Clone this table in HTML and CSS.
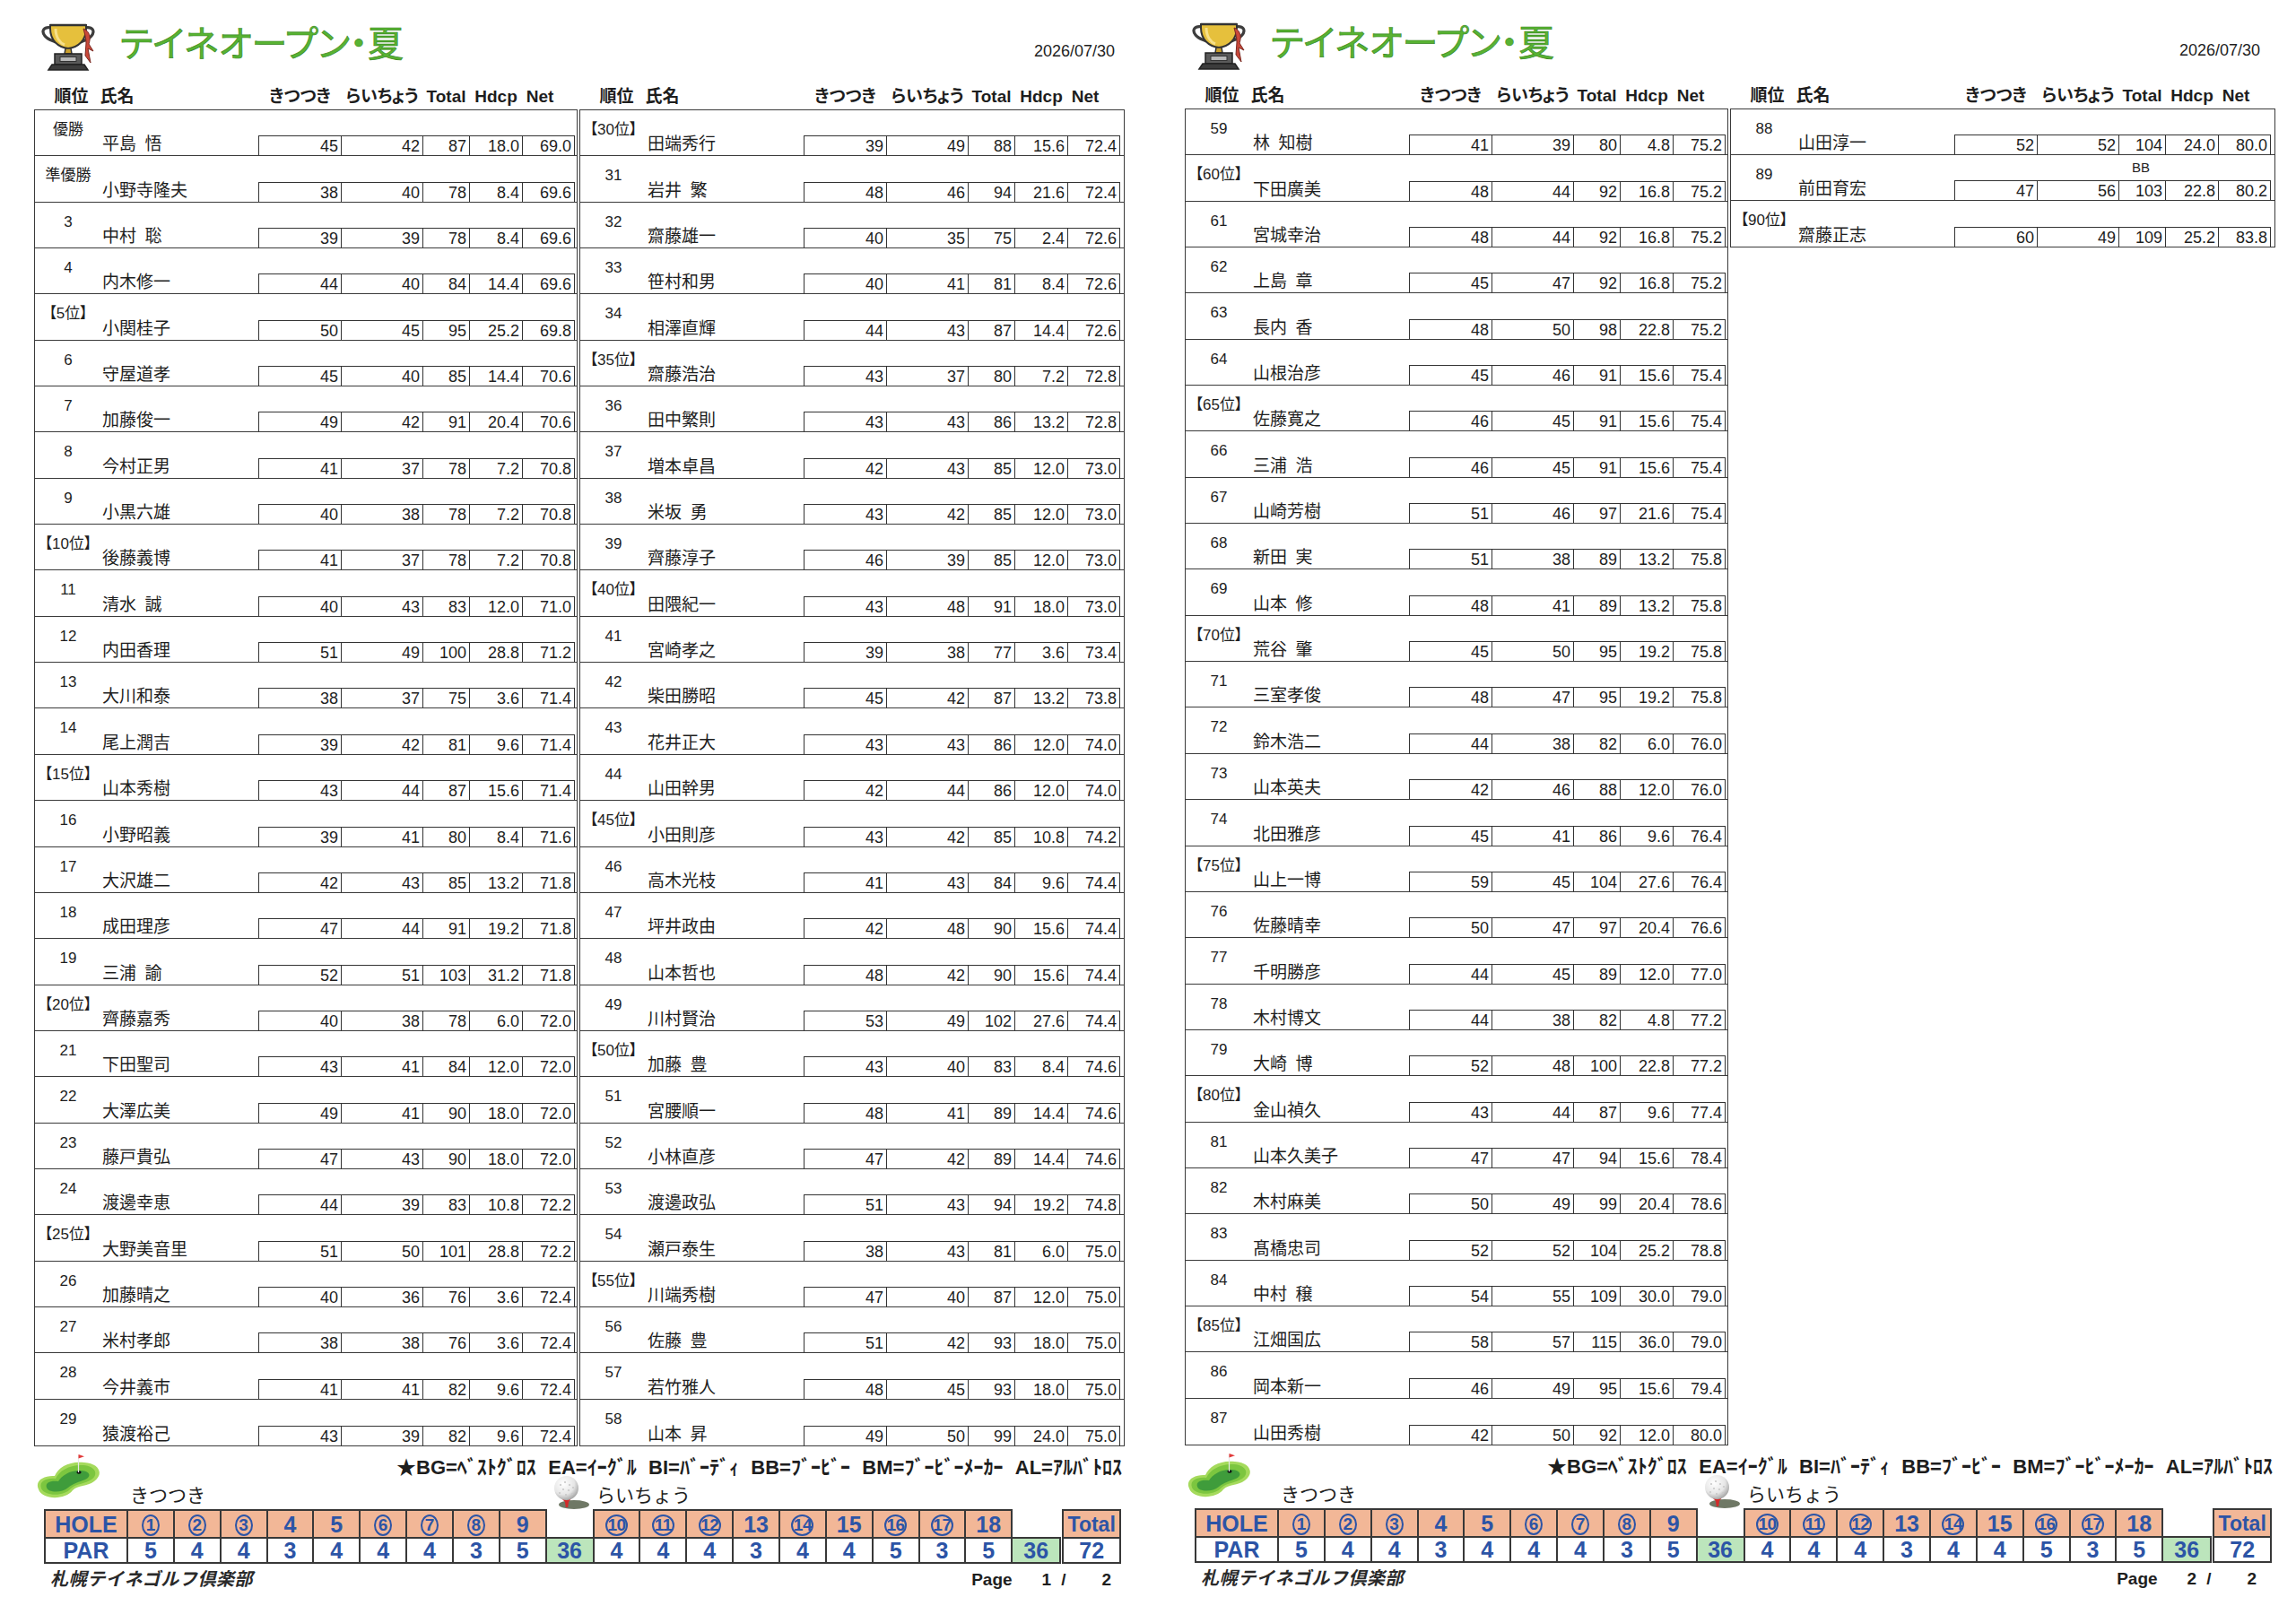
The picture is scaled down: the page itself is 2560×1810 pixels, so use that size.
FILE: index.html
```html
<!DOCTYPE html>
<html lang="ja">
<head>
<meta charset="utf-8">
<title>テイネオープン・夏</title>
<link rel="stylesheet" href="styles.css">
</head>
<body>
<div class="sheet">

<!-- ================= PAGE 1 ================= -->
<section class="page page-1">
  <header class="head">
    <svg class="trophy" viewBox="0 0 62 56" aria-hidden="true">
      <path d="M12 8 C2 6 0 12 4 17 C7 21 12 22 16 24" fill="none" stroke="#3d3d3d" stroke-width="3.2"/>
      <path d="M48 8 C58 6 60 12 56 17 C53 21 48 22 44 24" fill="none" stroke="#3d3d3d" stroke-width="3.2"/>
      <path d="M10 5 H50 V9 C50 22 41 30 30 31 C19 30 10 22 10 9 Z" fill="#e6c03c" stroke="#333" stroke-width="2"/>
      <path d="M16 9 C16 19 21 25 26 27" stroke="#f7e08a" stroke-width="3" fill="none"/>
      <path d="M10 5 H50" stroke="#333" stroke-width="2.6"/>
      <path d="M27 31 H33 L34 37 H26 Z" fill="#c99f2e" stroke="#333" stroke-width="1.5"/>
      <rect x="15" y="37" width="30" height="12" fill="#5a5a5a" stroke="#222" stroke-width="1.5"/>
      <rect x="21" y="40.5" width="18" height="5" fill="#b8b8b8" stroke="#333" stroke-width="1"/>
      <path d="M8 55 L12 49 H48 L52 55 Z" fill="#3c3c3c" stroke="#222" stroke-width="1.5"/>
      <path d="M47 9 C53 11 56 18 53 26 L58 34 L52 31 L55 47 L49 39 L50 25 C50 18 48 14 47 9 Z" fill="#c9483a" stroke="#7a2a22" stroke-width="1"/>
    </svg>
    <h1 class="title">テイネオープン・夏</h1>
    <div class="date">2026/07/30</div>
  </header>

  <div class="colhead">
    <div class="hgrid l"><span class="h-rank">順位</span><span class="h-name">氏名</span><span>きつつき</span><span>らいちょう</span><span>Total</span><span>Hdcp</span><span class="h-net">Net</span></div>
    <div class="hgrid r"><span class="h-rank">順位</span><span class="h-name">氏名</span><span>きつつき</span><span>らいちょう</span><span>Total</span><span>Hdcp</span><span class="h-net">Net</span></div>
  </div>

  <div class="tables">
    <div class="half l">
      <div class="row"><div class="rk">優勝</div><div class="nm">平島&ensp;悟</div><div class="box"><span>45</span><span>42</span><span>87</span><span>18.0</span><span>69.0</span></div></div>
      <div class="row"><div class="rk">準優勝</div><div class="nm">小野寺隆夫</div><div class="box"><span>38</span><span>40</span><span>78</span><span>8.4</span><span>69.6</span></div></div>
      <div class="row"><div class="rk">3</div><div class="nm">中村&ensp;聡</div><div class="box"><span>39</span><span>39</span><span>78</span><span>8.4</span><span>69.6</span></div></div>
      <div class="row"><div class="rk">4</div><div class="nm">内木修一</div><div class="box"><span>44</span><span>40</span><span>84</span><span>14.4</span><span>69.6</span></div></div>
      <div class="row"><div class="rk">【5位】</div><div class="nm">小関桂子</div><div class="box"><span>50</span><span>45</span><span>95</span><span>25.2</span><span>69.8</span></div></div>
      <div class="row"><div class="rk">6</div><div class="nm">守屋道孝</div><div class="box"><span>45</span><span>40</span><span>85</span><span>14.4</span><span>70.6</span></div></div>
      <div class="row"><div class="rk">7</div><div class="nm">加藤俊一</div><div class="box"><span>49</span><span>42</span><span>91</span><span>20.4</span><span>70.6</span></div></div>
      <div class="row"><div class="rk">8</div><div class="nm">今村正男</div><div class="box"><span>41</span><span>37</span><span>78</span><span>7.2</span><span>70.8</span></div></div>
      <div class="row"><div class="rk">9</div><div class="nm">小黒六雄</div><div class="box"><span>40</span><span>38</span><span>78</span><span>7.2</span><span>70.8</span></div></div>
      <div class="row"><div class="rk">【10位】</div><div class="nm">後藤義博</div><div class="box"><span>41</span><span>37</span><span>78</span><span>7.2</span><span>70.8</span></div></div>
      <div class="row"><div class="rk">11</div><div class="nm">清水&ensp;誠</div><div class="box"><span>40</span><span>43</span><span>83</span><span>12.0</span><span>71.0</span></div></div>
      <div class="row"><div class="rk">12</div><div class="nm">内田香理</div><div class="box"><span>51</span><span>49</span><span>100</span><span>28.8</span><span>71.2</span></div></div>
      <div class="row"><div class="rk">13</div><div class="nm">大川和泰</div><div class="box"><span>38</span><span>37</span><span>75</span><span>3.6</span><span>71.4</span></div></div>
      <div class="row"><div class="rk">14</div><div class="nm">尾上潤吉</div><div class="box"><span>39</span><span>42</span><span>81</span><span>9.6</span><span>71.4</span></div></div>
      <div class="row"><div class="rk">【15位】</div><div class="nm">山本秀樹</div><div class="box"><span>43</span><span>44</span><span>87</span><span>15.6</span><span>71.4</span></div></div>
      <div class="row"><div class="rk">16</div><div class="nm">小野昭義</div><div class="box"><span>39</span><span>41</span><span>80</span><span>8.4</span><span>71.6</span></div></div>
      <div class="row"><div class="rk">17</div><div class="nm">大沢雄二</div><div class="box"><span>42</span><span>43</span><span>85</span><span>13.2</span><span>71.8</span></div></div>
      <div class="row"><div class="rk">18</div><div class="nm">成田理彦</div><div class="box"><span>47</span><span>44</span><span>91</span><span>19.2</span><span>71.8</span></div></div>
      <div class="row"><div class="rk">19</div><div class="nm">三浦&ensp;諭</div><div class="box"><span>52</span><span>51</span><span>103</span><span>31.2</span><span>71.8</span></div></div>
      <div class="row"><div class="rk">【20位】</div><div class="nm">齊藤嘉秀</div><div class="box"><span>40</span><span>38</span><span>78</span><span>6.0</span><span>72.0</span></div></div>
      <div class="row"><div class="rk">21</div><div class="nm">下田聖司</div><div class="box"><span>43</span><span>41</span><span>84</span><span>12.0</span><span>72.0</span></div></div>
      <div class="row"><div class="rk">22</div><div class="nm">大澤広美</div><div class="box"><span>49</span><span>41</span><span>90</span><span>18.0</span><span>72.0</span></div></div>
      <div class="row"><div class="rk">23</div><div class="nm">藤戸貴弘</div><div class="box"><span>47</span><span>43</span><span>90</span><span>18.0</span><span>72.0</span></div></div>
      <div class="row"><div class="rk">24</div><div class="nm">渡邊幸恵</div><div class="box"><span>44</span><span>39</span><span>83</span><span>10.8</span><span>72.2</span></div></div>
      <div class="row"><div class="rk">【25位】</div><div class="nm">大野美音里</div><div class="box"><span>51</span><span>50</span><span>101</span><span>28.8</span><span>72.2</span></div></div>
      <div class="row"><div class="rk">26</div><div class="nm">加藤晴之</div><div class="box"><span>40</span><span>36</span><span>76</span><span>3.6</span><span>72.4</span></div></div>
      <div class="row"><div class="rk">27</div><div class="nm">米村孝郎</div><div class="box"><span>38</span><span>38</span><span>76</span><span>3.6</span><span>72.4</span></div></div>
      <div class="row"><div class="rk">28</div><div class="nm">今井義市</div><div class="box"><span>41</span><span>41</span><span>82</span><span>9.6</span><span>72.4</span></div></div>
      <div class="row"><div class="rk">29</div><div class="nm">猿渡裕己</div><div class="box"><span>43</span><span>39</span><span>82</span><span>9.6</span><span>72.4</span></div></div>
    </div>
    <div class="half r">
      <div class="row"><div class="rk">【30位】</div><div class="nm">田端秀行</div><div class="box"><span>39</span><span>49</span><span>88</span><span>15.6</span><span>72.4</span></div></div>
      <div class="row"><div class="rk">31</div><div class="nm">岩井&ensp;繁</div><div class="box"><span>48</span><span>46</span><span>94</span><span>21.6</span><span>72.4</span></div></div>
      <div class="row"><div class="rk">32</div><div class="nm">齋藤雄一</div><div class="box"><span>40</span><span>35</span><span>75</span><span>2.4</span><span>72.6</span></div></div>
      <div class="row"><div class="rk">33</div><div class="nm">笹村和男</div><div class="box"><span>40</span><span>41</span><span>81</span><span>8.4</span><span>72.6</span></div></div>
      <div class="row"><div class="rk">34</div><div class="nm">相澤直輝</div><div class="box"><span>44</span><span>43</span><span>87</span><span>14.4</span><span>72.6</span></div></div>
      <div class="row"><div class="rk">【35位】</div><div class="nm">齋藤浩治</div><div class="box"><span>43</span><span>37</span><span>80</span><span>7.2</span><span>72.8</span></div></div>
      <div class="row"><div class="rk">36</div><div class="nm">田中繁則</div><div class="box"><span>43</span><span>43</span><span>86</span><span>13.2</span><span>72.8</span></div></div>
      <div class="row"><div class="rk">37</div><div class="nm">増本卓昌</div><div class="box"><span>42</span><span>43</span><span>85</span><span>12.0</span><span>73.0</span></div></div>
      <div class="row"><div class="rk">38</div><div class="nm">米坂&ensp;勇</div><div class="box"><span>43</span><span>42</span><span>85</span><span>12.0</span><span>73.0</span></div></div>
      <div class="row"><div class="rk">39</div><div class="nm">齊藤淳子</div><div class="box"><span>46</span><span>39</span><span>85</span><span>12.0</span><span>73.0</span></div></div>
      <div class="row"><div class="rk">【40位】</div><div class="nm">田隈紀一</div><div class="box"><span>43</span><span>48</span><span>91</span><span>18.0</span><span>73.0</span></div></div>
      <div class="row"><div class="rk">41</div><div class="nm">宮崎孝之</div><div class="box"><span>39</span><span>38</span><span>77</span><span>3.6</span><span>73.4</span></div></div>
      <div class="row"><div class="rk">42</div><div class="nm">柴田勝昭</div><div class="box"><span>45</span><span>42</span><span>87</span><span>13.2</span><span>73.8</span></div></div>
      <div class="row"><div class="rk">43</div><div class="nm">花井正大</div><div class="box"><span>43</span><span>43</span><span>86</span><span>12.0</span><span>74.0</span></div></div>
      <div class="row"><div class="rk">44</div><div class="nm">山田幹男</div><div class="box"><span>42</span><span>44</span><span>86</span><span>12.0</span><span>74.0</span></div></div>
      <div class="row"><div class="rk">【45位】</div><div class="nm">小田則彦</div><div class="box"><span>43</span><span>42</span><span>85</span><span>10.8</span><span>74.2</span></div></div>
      <div class="row"><div class="rk">46</div><div class="nm">高木光枝</div><div class="box"><span>41</span><span>43</span><span>84</span><span>9.6</span><span>74.4</span></div></div>
      <div class="row"><div class="rk">47</div><div class="nm">坪井政由</div><div class="box"><span>42</span><span>48</span><span>90</span><span>15.6</span><span>74.4</span></div></div>
      <div class="row"><div class="rk">48</div><div class="nm">山本哲也</div><div class="box"><span>48</span><span>42</span><span>90</span><span>15.6</span><span>74.4</span></div></div>
      <div class="row"><div class="rk">49</div><div class="nm">川村賢治</div><div class="box"><span>53</span><span>49</span><span>102</span><span>27.6</span><span>74.4</span></div></div>
      <div class="row"><div class="rk">【50位】</div><div class="nm">加藤&ensp;豊</div><div class="box"><span>43</span><span>40</span><span>83</span><span>8.4</span><span>74.6</span></div></div>
      <div class="row"><div class="rk">51</div><div class="nm">宮腰順一</div><div class="box"><span>48</span><span>41</span><span>89</span><span>14.4</span><span>74.6</span></div></div>
      <div class="row"><div class="rk">52</div><div class="nm">小林直彦</div><div class="box"><span>47</span><span>42</span><span>89</span><span>14.4</span><span>74.6</span></div></div>
      <div class="row"><div class="rk">53</div><div class="nm">渡邊政弘</div><div class="box"><span>51</span><span>43</span><span>94</span><span>19.2</span><span>74.8</span></div></div>
      <div class="row"><div class="rk">54</div><div class="nm">瀬戸泰生</div><div class="box"><span>38</span><span>43</span><span>81</span><span>6.0</span><span>75.0</span></div></div>
      <div class="row"><div class="rk">【55位】</div><div class="nm">川端秀樹</div><div class="box"><span>47</span><span>40</span><span>87</span><span>12.0</span><span>75.0</span></div></div>
      <div class="row"><div class="rk">56</div><div class="nm">佐藤&ensp;豊</div><div class="box"><span>51</span><span>42</span><span>93</span><span>18.0</span><span>75.0</span></div></div>
      <div class="row"><div class="rk">57</div><div class="nm">若竹雅人</div><div class="box"><span>48</span><span>45</span><span>93</span><span>18.0</span><span>75.0</span></div></div>
      <div class="row"><div class="rk">58</div><div class="nm">山本&ensp;昇</div><div class="box"><span>49</span><span>50</span><span>99</span><span>24.0</span><span>75.0</span></div></div>
    </div>
  </div>

  <div class="foot-top">
    <svg class="green" viewBox="0 0 76 54" aria-hidden="true">
      <path d="M5 41 C0 30 13 25 23 26 C27 16 40 9 56 11 C73 12 78 24 67 32 C59 38 49 36 43 42 C35 53 9 53 5 41 Z" fill="#a5da5c"/>
      <path d="M8 40 C5 31 15 28 24 29 C28 20 40 13 55 14 C69 15 72 25 64 30 C57 35 48 34 41 40 C34 49 12 49 8 40 Z" fill="#7cc63f"/>
      <path d="M14 39 C12 33 19 31 27 32 C31 25 41 19 53 20 C63 21 64 27 57 30 C50 33 44 34 38 39 C31 45 16 45 14 39 Z" fill="#3f9c3b"/>
      <ellipse cx="50" cy="22" rx="2.6" ry="1.8" fill="#111"/>
      <line x1="49.5" y1="22" x2="49.5" y2="3" stroke="#e8e8e8" stroke-width="1.2"/>
      <path d="M49.5 2 L56 4.2 L49.5 6.5 Z" fill="#e23a3a"/>
    </svg>
    <div class="legend"><span>★BG=ﾍﾞｽﾄｸﾞﾛｽ</span><span>EA=ｲｰｸﾞﾙ</span><span>BI=ﾊﾞｰﾃﾞｨ</span><span>BB=ﾌﾞｰﾋﾞｰ</span><span>BM=ﾌﾞｰﾋﾞｰﾒｰｶｰ</span><span>AL=ｱﾙﾊﾞﾄﾛｽ</span></div>
    <div class="lbl k">きつつき</div>
    <svg class="ball" viewBox="0 0 53 38" aria-hidden="true">
      <defs><radialGradient id="ballg1" cx="0.38" cy="0.32" r="0.75"><stop offset="0" stop-color="#ffffff"/><stop offset="0.6" stop-color="#e6e6e6"/><stop offset="1" stop-color="#9a9a9a"/></radialGradient></defs>
      <ellipse cx="33" cy="31" rx="17" ry="5" fill="#56604a" opacity="0.85"/>
      <path d="M19 24 H30 L27 28 L26.2 34 H23.8 L23 28 Z" fill="#d42a2a"/>
      <circle cx="24.5" cy="12.5" r="13.5" fill="url(#ballg1)"/>
      <g fill="#c9c9c9"><circle cx="18" cy="9" r="1.1"/><circle cx="23" cy="6" r="1.1"/><circle cx="28" cy="9" r="1.1"/><circle cx="21" cy="14" r="1.1"/><circle cx="27" cy="15" r="1.1"/><circle cx="32" cy="12" r="1.1"/><circle cx="17" cy="18" r="1.1"/><circle cx="24" cy="20" r="1.1"/><circle cx="31" cy="19" r="1.1"/></g>
    </svg>
    <div class="lbl r">らいちょう</div>
  </div>

  <table class="holes">
    <colgroup><col class="c-hole"><col class="c-h" span="9"><col class="c-g1"><col class="c-h" span="9"><col class="c-g2"><col class="c-sep"><col class="c-tot"></colgroup>
    <tr class="hr"><th>HOLE</th><td><span class="ci">1</span></td><td><span class="ci">2</span></td><td><span class="ci">3</span></td><td>4</td><td>5</td><td><span class="ci">6</span></td><td><span class="ci">7</span></td><td><span class="ci">8</span></td><td>9</td><td class="blank"></td><td><span class="ci w2">10</span></td><td><span class="ci w2">11</span></td><td><span class="ci w2">12</span></td><td>13</td><td><span class="ci w2">14</span></td><td>15</td><td><span class="ci w2">16</span></td><td><span class="ci w2">17</span></td><td>18</td><td class="blank"></td><td class="sep"></td><th class="tot">Total</th></tr>
    <tr class="pr"><th>PAR</th><td>5</td><td>4</td><td>4</td><td>3</td><td>4</td><td>4</td><td>4</td><td>3</td><td>5</td><td class="grn">36</td><td>4</td><td>4</td><td>4</td><td>3</td><td>4</td><td>4</td><td>5</td><td>3</td><td>5</td><td class="grn">36</td><td class="sep"></td><td>72</td></tr>
  </table>

  <div class="foot-bot">
    <div class="club">札幌テイネゴルフ倶楽部</div>
    <div class="pg"><span>Page</span><span class="n1">1</span><span class="sl">/</span><span class="n2">2</span></div>
  </div>
</section>

<!-- ================= PAGE 2 ================= -->
<section class="page page-2">
  <header class="head">
    <svg class="trophy" viewBox="0 0 62 56" aria-hidden="true">
      <path d="M12 8 C2 6 0 12 4 17 C7 21 12 22 16 24" fill="none" stroke="#3d3d3d" stroke-width="3.2"/>
      <path d="M48 8 C58 6 60 12 56 17 C53 21 48 22 44 24" fill="none" stroke="#3d3d3d" stroke-width="3.2"/>
      <path d="M10 5 H50 V9 C50 22 41 30 30 31 C19 30 10 22 10 9 Z" fill="#e6c03c" stroke="#333" stroke-width="2"/>
      <path d="M16 9 C16 19 21 25 26 27" stroke="#f7e08a" stroke-width="3" fill="none"/>
      <path d="M10 5 H50" stroke="#333" stroke-width="2.6"/>
      <path d="M27 31 H33 L34 37 H26 Z" fill="#c99f2e" stroke="#333" stroke-width="1.5"/>
      <rect x="15" y="37" width="30" height="12" fill="#5a5a5a" stroke="#222" stroke-width="1.5"/>
      <rect x="21" y="40.5" width="18" height="5" fill="#b8b8b8" stroke="#333" stroke-width="1"/>
      <path d="M8 55 L12 49 H48 L52 55 Z" fill="#3c3c3c" stroke="#222" stroke-width="1.5"/>
      <path d="M47 9 C53 11 56 18 53 26 L58 34 L52 31 L55 47 L49 39 L50 25 C50 18 48 14 47 9 Z" fill="#c9483a" stroke="#7a2a22" stroke-width="1"/>
    </svg>
    <h1 class="title">テイネオープン・夏</h1>
    <div class="date">2026/07/30</div>
  </header>

  <div class="colhead">
    <div class="hgrid l"><span class="h-rank">順位</span><span class="h-name">氏名</span><span>きつつき</span><span>らいちょう</span><span>Total</span><span>Hdcp</span><span class="h-net">Net</span></div>
    <div class="hgrid r"><span class="h-rank">順位</span><span class="h-name">氏名</span><span>きつつき</span><span>らいちょう</span><span>Total</span><span>Hdcp</span><span class="h-net">Net</span></div>
  </div>

  <div class="tables">
    <div class="half l">
      <div class="row"><div class="rk">59</div><div class="nm">林&ensp;知樹</div><div class="box"><span>41</span><span>39</span><span>80</span><span>4.8</span><span>75.2</span></div></div>
      <div class="row"><div class="rk">【60位】</div><div class="nm">下田廣美</div><div class="box"><span>48</span><span>44</span><span>92</span><span>16.8</span><span>75.2</span></div></div>
      <div class="row"><div class="rk">61</div><div class="nm">宮城幸治</div><div class="box"><span>48</span><span>44</span><span>92</span><span>16.8</span><span>75.2</span></div></div>
      <div class="row"><div class="rk">62</div><div class="nm">上島&ensp;章</div><div class="box"><span>45</span><span>47</span><span>92</span><span>16.8</span><span>75.2</span></div></div>
      <div class="row"><div class="rk">63</div><div class="nm">長内&ensp;香</div><div class="box"><span>48</span><span>50</span><span>98</span><span>22.8</span><span>75.2</span></div></div>
      <div class="row"><div class="rk">64</div><div class="nm">山根治彦</div><div class="box"><span>45</span><span>46</span><span>91</span><span>15.6</span><span>75.4</span></div></div>
      <div class="row"><div class="rk">【65位】</div><div class="nm">佐藤寛之</div><div class="box"><span>46</span><span>45</span><span>91</span><span>15.6</span><span>75.4</span></div></div>
      <div class="row"><div class="rk">66</div><div class="nm">三浦&ensp;浩</div><div class="box"><span>46</span><span>45</span><span>91</span><span>15.6</span><span>75.4</span></div></div>
      <div class="row"><div class="rk">67</div><div class="nm">山崎芳樹</div><div class="box"><span>51</span><span>46</span><span>97</span><span>21.6</span><span>75.4</span></div></div>
      <div class="row"><div class="rk">68</div><div class="nm">新田&ensp;実</div><div class="box"><span>51</span><span>38</span><span>89</span><span>13.2</span><span>75.8</span></div></div>
      <div class="row"><div class="rk">69</div><div class="nm">山本&ensp;修</div><div class="box"><span>48</span><span>41</span><span>89</span><span>13.2</span><span>75.8</span></div></div>
      <div class="row"><div class="rk">【70位】</div><div class="nm">荒谷&ensp;肇</div><div class="box"><span>45</span><span>50</span><span>95</span><span>19.2</span><span>75.8</span></div></div>
      <div class="row"><div class="rk">71</div><div class="nm">三室孝俊</div><div class="box"><span>48</span><span>47</span><span>95</span><span>19.2</span><span>75.8</span></div></div>
      <div class="row"><div class="rk">72</div><div class="nm">鈴木浩二</div><div class="box"><span>44</span><span>38</span><span>82</span><span>6.0</span><span>76.0</span></div></div>
      <div class="row"><div class="rk">73</div><div class="nm">山本英夫</div><div class="box"><span>42</span><span>46</span><span>88</span><span>12.0</span><span>76.0</span></div></div>
      <div class="row"><div class="rk">74</div><div class="nm">北田雅彦</div><div class="box"><span>45</span><span>41</span><span>86</span><span>9.6</span><span>76.4</span></div></div>
      <div class="row"><div class="rk">【75位】</div><div class="nm">山上一博</div><div class="box"><span>59</span><span>45</span><span>104</span><span>27.6</span><span>76.4</span></div></div>
      <div class="row"><div class="rk">76</div><div class="nm">佐藤晴幸</div><div class="box"><span>50</span><span>47</span><span>97</span><span>20.4</span><span>76.6</span></div></div>
      <div class="row"><div class="rk">77</div><div class="nm">千明勝彦</div><div class="box"><span>44</span><span>45</span><span>89</span><span>12.0</span><span>77.0</span></div></div>
      <div class="row"><div class="rk">78</div><div class="nm">木村博文</div><div class="box"><span>44</span><span>38</span><span>82</span><span>4.8</span><span>77.2</span></div></div>
      <div class="row"><div class="rk">79</div><div class="nm">大崎&ensp;博</div><div class="box"><span>52</span><span>48</span><span>100</span><span>22.8</span><span>77.2</span></div></div>
      <div class="row"><div class="rk">【80位】</div><div class="nm">金山禎久</div><div class="box"><span>43</span><span>44</span><span>87</span><span>9.6</span><span>77.4</span></div></div>
      <div class="row"><div class="rk">81</div><div class="nm">山本久美子</div><div class="box"><span>47</span><span>47</span><span>94</span><span>15.6</span><span>78.4</span></div></div>
      <div class="row"><div class="rk">82</div><div class="nm">木村麻美</div><div class="box"><span>50</span><span>49</span><span>99</span><span>20.4</span><span>78.6</span></div></div>
      <div class="row"><div class="rk">83</div><div class="nm">髙橋忠司</div><div class="box"><span>52</span><span>52</span><span>104</span><span>25.2</span><span>78.8</span></div></div>
      <div class="row"><div class="rk">84</div><div class="nm">中村&ensp;穣</div><div class="box"><span>54</span><span>55</span><span>109</span><span>30.0</span><span>79.0</span></div></div>
      <div class="row"><div class="rk">【85位】</div><div class="nm">江畑国広</div><div class="box"><span>58</span><span>57</span><span>115</span><span>36.0</span><span>79.0</span></div></div>
      <div class="row"><div class="rk">86</div><div class="nm">岡本新一</div><div class="box"><span>46</span><span>49</span><span>95</span><span>15.6</span><span>79.4</span></div></div>
      <div class="row"><div class="rk">87</div><div class="nm">山田秀樹</div><div class="box"><span>42</span><span>50</span><span>92</span><span>12.0</span><span>80.0</span></div></div>
    </div>
    <div class="half r short">
      <div class="row"><div class="rk">88</div><div class="nm">山田淳一</div><div class="box"><span>52</span><span>52</span><span>104</span><span>24.0</span><span>80.0</span></div></div>
      <div class="row"><div class="rk">89</div><div class="nm">前田育宏</div><div class="note">BB</div><div class="box"><span>47</span><span>56</span><span>103</span><span>22.8</span><span>80.2</span></div></div>
      <div class="row"><div class="rk">【90位】</div><div class="nm">齋藤正志</div><div class="box"><span>60</span><span>49</span><span>109</span><span>25.2</span><span>83.8</span></div></div>
    </div>
  </div>

  <div class="foot-top">
    <svg class="green" viewBox="0 0 76 54" aria-hidden="true">
      <path d="M5 41 C0 30 13 25 23 26 C27 16 40 9 56 11 C73 12 78 24 67 32 C59 38 49 36 43 42 C35 53 9 53 5 41 Z" fill="#a5da5c"/>
      <path d="M8 40 C5 31 15 28 24 29 C28 20 40 13 55 14 C69 15 72 25 64 30 C57 35 48 34 41 40 C34 49 12 49 8 40 Z" fill="#7cc63f"/>
      <path d="M14 39 C12 33 19 31 27 32 C31 25 41 19 53 20 C63 21 64 27 57 30 C50 33 44 34 38 39 C31 45 16 45 14 39 Z" fill="#3f9c3b"/>
      <ellipse cx="50" cy="22" rx="2.6" ry="1.8" fill="#111"/>
      <line x1="49.5" y1="22" x2="49.5" y2="3" stroke="#e8e8e8" stroke-width="1.2"/>
      <path d="M49.5 2 L56 4.2 L49.5 6.5 Z" fill="#e23a3a"/>
    </svg>
    <div class="legend"><span>★BG=ﾍﾞｽﾄｸﾞﾛｽ</span><span>EA=ｲｰｸﾞﾙ</span><span>BI=ﾊﾞｰﾃﾞｨ</span><span>BB=ﾌﾞｰﾋﾞｰ</span><span>BM=ﾌﾞｰﾋﾞｰﾒｰｶｰ</span><span>AL=ｱﾙﾊﾞﾄﾛｽ</span></div>
    <div class="lbl k">きつつき</div>
    <svg class="ball" viewBox="0 0 53 38" aria-hidden="true">
      <defs><radialGradient id="ballg2" cx="0.38" cy="0.32" r="0.75"><stop offset="0" stop-color="#ffffff"/><stop offset="0.6" stop-color="#e6e6e6"/><stop offset="1" stop-color="#9a9a9a"/></radialGradient></defs>
      <ellipse cx="33" cy="31" rx="17" ry="5" fill="#56604a" opacity="0.85"/>
      <path d="M19 24 H30 L27 28 L26.2 34 H23.8 L23 28 Z" fill="#d42a2a"/>
      <circle cx="24.5" cy="12.5" r="13.5" fill="url(#ballg2)"/>
      <g fill="#c9c9c9"><circle cx="18" cy="9" r="1.1"/><circle cx="23" cy="6" r="1.1"/><circle cx="28" cy="9" r="1.1"/><circle cx="21" cy="14" r="1.1"/><circle cx="27" cy="15" r="1.1"/><circle cx="32" cy="12" r="1.1"/><circle cx="17" cy="18" r="1.1"/><circle cx="24" cy="20" r="1.1"/><circle cx="31" cy="19" r="1.1"/></g>
    </svg>
    <div class="lbl r">らいちょう</div>
  </div>

  <table class="holes">
    <colgroup><col class="c-hole"><col class="c-h" span="9"><col class="c-g1"><col class="c-h" span="9"><col class="c-g2"><col class="c-sep"><col class="c-tot"></colgroup>
    <tr class="hr"><th>HOLE</th><td><span class="ci">1</span></td><td><span class="ci">2</span></td><td><span class="ci">3</span></td><td>4</td><td>5</td><td><span class="ci">6</span></td><td><span class="ci">7</span></td><td><span class="ci">8</span></td><td>9</td><td class="blank"></td><td><span class="ci w2">10</span></td><td><span class="ci w2">11</span></td><td><span class="ci w2">12</span></td><td>13</td><td><span class="ci w2">14</span></td><td>15</td><td><span class="ci w2">16</span></td><td><span class="ci w2">17</span></td><td>18</td><td class="blank"></td><td class="sep"></td><th class="tot">Total</th></tr>
    <tr class="pr"><th>PAR</th><td>5</td><td>4</td><td>4</td><td>3</td><td>4</td><td>4</td><td>4</td><td>3</td><td>5</td><td class="grn">36</td><td>4</td><td>4</td><td>4</td><td>3</td><td>4</td><td>4</td><td>5</td><td>3</td><td>5</td><td class="grn">36</td><td class="sep"></td><td>72</td></tr>
  </table>

  <div class="foot-bot">
    <div class="club">札幌テイネゴルフ倶楽部</div>
    <div class="pg"><span>Page</span><span class="n1">2</span><span class="sl">/</span><span class="n2">2</span></div>
  </div>
</section>

</div>
</body>
</html>
```

FILE: styles.css
```css
html, body {
  margin: 0;
  padding: 0;
  background: #ffffff;
}

body {
  font-family: "Liberation Sans", "Noto Sans CJK JP", sans-serif;
  color: #1e1e1e;
}

.sheet {
  display: flex;
  align-items: flex-start;
  width: 2560px;
  height: 1810px;
  overflow: hidden;
}

.page {
  flex: none;
  box-sizing: border-box;
}

.page-1 { width: 1283px; }
.page-2 { width: 1277px; margin-top: -1px; }

/* ---------- header ---------- */
.head {
  display: flex;
  align-items: flex-start;
  height: 98px;
}

.trophy {
  flex: none;
  width: 62px;
  height: 56px;
  margin: 23px 0 0 46px;
}

.title {
  margin: 26px 0 0 26px;
  font-family: "Noto Sans CJK JP", sans-serif;
  font-weight: 400;
  font-size: 40px;
  line-height: 40px;
  color: #58b332;
  -webkit-text-stroke: 0.7px #3a8a25;
  font-feature-settings: "palt";
  white-space: nowrap;
}

.date {
  margin: 48px 40px 0 auto;
  font-size: 18px;
  line-height: 18px;
}

/* ---------- column headings ---------- */
.colhead {
  display: flex;
  gap: 2px;
  margin-left: 38px;
  height: 24px;
  font-weight: 700;
  font-size: 19px;
  line-height: 20px;
  font-feature-settings: "palt";
}

.hgrid {
  display: grid;
  grid-template-columns: 74px 175px 92px 91px 52px 59px 59px;
  padding-left: 1.5px;
  box-sizing: border-box;
}

.hgrid.l { width: 606px; }
.hgrid.r { width: 608px; }

.hgrid span {
  text-align: center;
  white-space: nowrap;
}

.hgrid .h-rank { padding-left: 6px; }
.hgrid .h-name { text-align: left; margin-left: -2px; }
.hgrid .h-net { padding-right: 20px; }

/* ---------- result tables ---------- */
.tables {
  display: flex;
  align-items: flex-start;
  gap: 2px;
  margin-left: 38px;
}

.half {
  box-sizing: border-box;
  border: 1.5px solid #3a3a3a;
  display: grid;
  grid-template-rows: repeat(29, 1fr);
  height: 1491px;
}

.half.l { width: 606px; }
.half.r { width: 608px; }

.half.short {
  grid-template-rows: repeat(3, 1fr);
  height: 155px;
}

.row {
  display: grid;
  grid-template-columns: 74px 175px 353px;
  grid-template-rows: 1fr 22px;
  min-height: 0;
  border-bottom: 1.5px solid #3a3a3a;
}

.row:last-child { border-bottom: 0; }

.rk {
  grid-column: 1;
  grid-row: 1 / 3;
  padding-top: 13px;
  text-align: center;
  font-family: "Liberation Sans Narrow", "Liberation Sans", "Noto Sans CJK JP", sans-serif;
  font-size: 17px;
  line-height: 18px;
  font-feature-settings: "palt";
  white-space: nowrap;
}

.nm {
  grid-column: 2;
  grid-row: 2;
  padding-left: 1px;
  font-size: 19px;
  line-height: 20px;
  white-space: nowrap;
}

.note {
  grid-column: 3;
  grid-row: 1;
  align-self: end;
  width: 52px;
  margin: 0 0 7px 182px;
  text-align: center;
  font-size: 15px;
  line-height: 15px;
}

.box {
  grid-column: 3;
  grid-row: 2;
  display: grid;
  grid-template-columns: 91px 91px 52px 59px 58px;
  box-sizing: border-box;
  border: 1px solid #333;
  border-bottom: 0;
  font-family: "Liberation Sans Narrow", "Liberation Sans", sans-serif;
  font-size: 18px;
  line-height: 20px;
}

.box span {
  padding: 1px 3px 0 0;
  text-align: right;
  border-left: 1px solid #333;
}

.box span:first-child { border-left: 0; }

/* ---------- footer ---------- */
.foot-top {
  display: grid;
  grid-template-columns: 140px 467px 53px 1fr;
  grid-template-rows: 37px 33px;
  width: 1254px;
}

.green {
  grid-column: 1;
  grid-row: 1 / 3;
  width: 76px;
  height: 54px;
  margin: 7px 0 0 38px;
}

.legend {
  grid-column: 2 / 5;
  grid-row: 1;
  display: flex;
  justify-content: space-between;
  margin: 0 3px 0 302px;
  padding-top: 13px;
  font-weight: 700;
  font-size: 22px;
  line-height: 22px;
  white-space: nowrap;
}

.lbl {
  grid-row: 2;
  padding: 6px 0 0 5px;
  font-size: 21px;
  line-height: 24px;
  white-space: nowrap;
}

.lbl.k { grid-column: 2; }
.lbl.r { grid-column: 4; }

.ball {
  grid-column: 3;
  grid-row: 2;
  width: 53px;
  height: 38px;
  margin-top: -3px;
  overflow: visible;
}

.holes {
  border-collapse: collapse;
  table-layout: fixed;
  width: 1199px;
  margin-left: 49px;
  color: #2c54a6;
  font-weight: 700;
}

.holes col.c-hole { width: 92px; }
.holes col.c-h { width: 51.85px; }
.holes col.c-g1 { width: 53px; }
.holes col.c-g2 { width: 54px; }
.holes col.c-sep { width: 3px; }
.holes col.c-tot { width: 64px; }

.holes td,
.holes th {
  padding: 0;
  border: 2px solid #383838;
  text-align: center;
  vertical-align: middle;
  font-size: 25px;
  line-height: 24px;
  font-weight: 700;
}

.holes tr.hr td,
.holes tr.hr th {
  height: 29px;
  background: #f2b797;
}

.holes tr.pr td,
.holes tr.pr th {
  height: 26px;
  background: #ffffff;
}

.holes tr.pr td.grn { background: #bce5bc; }

.holes tr.hr td.blank,
.holes tr.hr td.sep,
.holes tr.pr td.sep {
  border: none;
  background: transparent;
}

.holes tr.hr th.tot { font-size: 23px; }

.ci {
  display: inline-block;
  box-sizing: border-box;
  width: 20px;
  height: 24px;
  border: 2px solid #2c54a6;
  border-radius: 50%;
  font-family: "Liberation Sans Narrow", "Liberation Sans", sans-serif;
  font-size: 19px;
  line-height: 20px;
  font-weight: 700;
  vertical-align: middle;
}

.ci.w2 {
  width: 25px;
  letter-spacing: -0.5px;
}

.foot-bot {
  display: flex;
  align-items: baseline;
  margin-top: 6px;
}

.club {
  margin-left: 56px;
  font-size: 20px;
  line-height: 22px;
  font-weight: 700;
  font-style: italic;
  letter-spacing: 0.6px;
  color: #2a2a2a;
  white-space: nowrap;
}

.pg {
  display: flex;
  align-items: baseline;
  margin: 0 44px 0 auto;
  font-size: 19px;
  font-weight: 700;
}

.pg .n1 { margin-left: 33px; }
.pg .sl { margin-left: 11px; }
.pg .n2 { margin-left: 40px; }
```
